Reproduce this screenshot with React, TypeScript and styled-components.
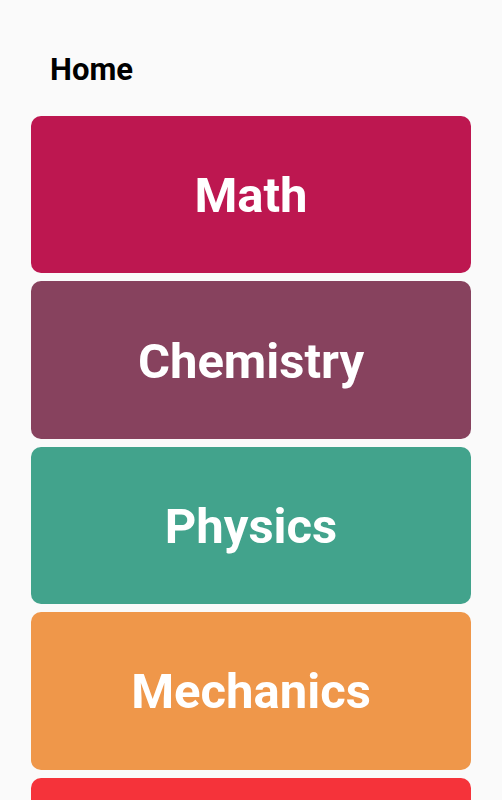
import React from 'react';
import styled, { createGlobalStyle } from 'styled-components';

const GlobalStyle = createGlobalStyle`
    html, body {
        margin: 0;
        padding: 0;
        background-color: #fafafa;
        font-family: Roboto, "Liberation Sans", sans-serif;
    }
`;

const Page = styled.div`
    padding: 0 31px;
    height: 800px;
    overflow: hidden;
`;

const Title = styled.h1`
    margin: 0 0 26px 0;
    padding: 50px 0 0 19px;
    font-size: 31px;
    font-weight: 700;
    color: #000;
    line-height: 40px;
`;

const List = styled.div`
    display: flex;
    flex-direction: column;
    gap: 8px;
`;

const Card = styled.div<{ $bg: string }>`
    height: 157.4px;
    border-radius: 10px;
    background-color: ${(p) => p.$bg};
    display: flex;
    align-items: center;
    justify-content: center;
    flex-shrink: 0;
    span {
        color: #fff;
        font-size: 49px;
        font-weight: 700;
        padding-top: 2px;
    }
`;

const subjects = [
    { name: 'Math', color: '#bd1750' },
    { name: 'Chemistry', color: '#87425e' },
    { name: 'Physics', color: '#42a38c' },
    { name: 'Mechanics', color: '#ef974a' },
    { name: 'Electricity', color: '#f5333a' },
];

function App() {
    return (
        <Page>
            <GlobalStyle />
            <Title>Home</Title>
            <List>
                {subjects.map((s) => (
                    <Card key={s.name} $bg={s.color}>
                        <span>{s.name}</span>
                    </Card>
                ))}
            </List>
        </Page>
    );
}

export default App;
